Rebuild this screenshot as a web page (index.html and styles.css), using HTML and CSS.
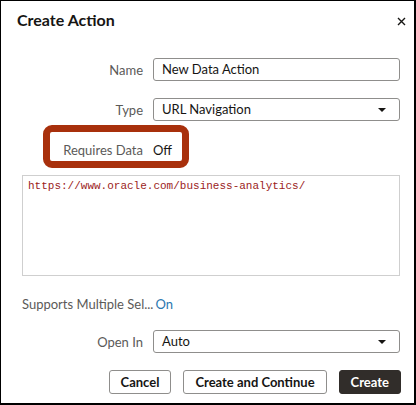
FILE: index.html
```html
<!DOCTYPE html>
<html>
<head>
    <title>Create Action</title>
    <link rel="stylesheet" href="styles.css">
</head>
<body>
    <div class="dialog">
        <div class="header">
            <h1>Create Action</h1>
            <span class="close">
                <svg width="9" height="9" viewBox="0 0 9 9"><path d="M1 1L8 8M8 1L1 8" stroke="#161513" stroke-width="1.4"/></svg>
            </span>
        </div>

        <div class="form">
            <div class="row">
                <label>Name</label>
                <div class="field">New Data Action</div>
            </div>
            <div class="row">
                <label>Type</label>
                <div class="field select">URL Navigation<span class="caret"></span></div>
            </div>
            <div class="row row-req">
                <label>Requires Data</label>
                <div class="value">Off</div>
            </div>
            <div class="url-box">https://www.oracle.com/business-analytics/</div>
            <div class="row row-multi">
                <span class="multi-label">Supports Multiple Sel...</span><span class="on">On</span>
            </div>
            <div class="row">
                <label>Open In</label>
                <div class="field select">Auto<span class="caret"></span></div>
            </div>
            <div class="buttons">
                <button class="btn">Cancel</button>
                <button class="btn">Create and Continue</button>
                <button class="btn primary">Create</button>
            </div>
        </div>

        <!-- callout around Requires Data -->
        <div class="highlight"></div>
    </div>
</body>
</html>
```

FILE: styles.css
```css
html, body {
    margin: 0;
    padding: 0;
}
body {
    font-family: 'Lato', 'Noto Sans', sans-serif;
    font-size: 13px;
    color: #161513;
    background: #fff;
}
.dialog {
    position: relative;
    box-sizing: border-box;
    width: 416px;
    height: 405px;
    border: 1px solid #000;
    border-right-width: 2px;
    border-bottom-width: 2px;
}
.header {
    display: flex;
    align-items: center;
    justify-content: space-between;
    height: 37px;
    padding: 0 8px 0 16px;
}
h1 {
    margin: 0;
    font-size: 16px;
    font-weight: bold;
}
.close {
    display: flex;
    margin-top: 3px;
}
.form {
    padding: 20px 14px 0 21px;
}
.row {
    display: grid;
    grid-template-columns: 121px 247px;
    column-gap: 10px;
    align-items: center;
    height: 23px;
    margin-bottom: 17px;
}
label {
    text-align: right;
    color: #5b5a58;
}
.field {
    box-sizing: border-box;
    height: 23px;
    border: 1px solid #8f8e8c;
    border-radius: 3px;
    padding: 0 8px;
    line-height: 21px;
    position: relative;
}
.caret {
    position: absolute;
    right: 13px;
    top: 9px;
    border-left: 4px solid transparent;
    border-right: 4px solid transparent;
    border-top: 4px solid #161513;
}
.row-req {
    margin-bottom: 14px;
}
.url-box {
    box-sizing: border-box;
    width: 378px;
    height: 101px;
    border: 1px solid #cfcfcf;
    padding: 4px 5px;
    font-family: 'Liberation Mono', monospace;
    font-size: 11px;
    color: #9b1c1c;
    margin-bottom: 16px;
}
.row-multi {
    display: flex;
    gap: 2px;
    margin-bottom: 15px;
}
.multi-label {
    color: #5b5a58;
}
.on {
    color: #2a78b0;
}
.buttons {
    display: flex;
    justify-content: flex-end;
    gap: 12px;
    width: 379px;
}
.btn {
    height: 24px;
    box-sizing: border-box;
    border: 1px solid #8f8e8c;
    border-radius: 3px;
    background: #fff;
    font-family: inherit;
    font-size: 13px;
    font-weight: bold;
    color: #161513;
    padding: 0 11px;
}
.btn.primary {
    background: #312d2a;
    border-color: #312d2a;
    color: #fff;
}
.highlight {
    position: absolute;
    left: 42px;
    top: 124px;
    width: 146px;
    height: 43px;
    box-sizing: border-box;
    border: 7px solid #a8300c;
    border-radius: 9px;
}
```
